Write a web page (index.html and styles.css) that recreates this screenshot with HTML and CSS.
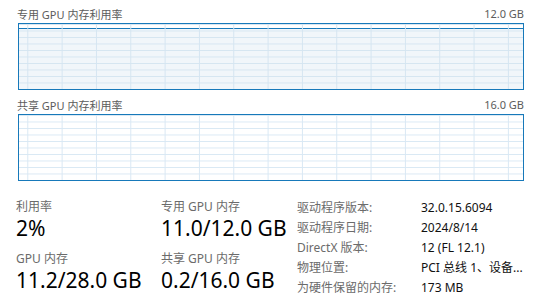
FILE: index.html
```html
<!DOCTYPE html>
<html lang="zh-CN">
<head>
  <meta charset="UTF-8">
  <meta name="viewport" content="width=device-width, initial-scale=1.0">
  <title>GPU 内存</title>
  <link rel="stylesheet" href="styles.css">
</head>
<body>
  <div class="page">
    <div class="chart-head">
      <span>专用 GPU 内存利用率</span>
      <span>12.0 GB</span>
    </div>
    <div class="chart chart-used"></div>

    <div class="chart-head second">
      <span>共享 GPU 内存利用率</span>
      <span>16.0 GB</span>
    </div>
    <div class="chart"></div>

    <div class="stats">
      <div class="col">
        <div class="stat">
          <div class="label">利用率</div>
          <div class="value">2%</div>
        </div>
        <div class="stat">
          <div class="label">GPU 内存</div>
          <div class="value">11.2/28.0 GB</div>
        </div>
      </div>
      <div class="col mid">
        <div class="stat">
          <div class="label">专用 GPU 内存</div>
          <div class="value">11.0/12.0 GB</div>
        </div>
        <div class="stat">
          <div class="label">共享 GPU 内存</div>
          <div class="value">0.2/16.0 GB</div>
        </div>
      </div>
      <div class="details">
        <span class="key">驱动程序版本:</span><span>32.0.15.6094</span>
        <span class="key">驱动程序日期:</span><span>2024/8/14</span>
        <span class="key">DirectX 版本:</span><span>12 (FL 12.1)</span>
        <span class="key">物理位置:</span><span>PCI 总线 1、设备...</span>
        <span class="key">为硬件保留的内存:</span><span>173 MB</span>
      </div>
    </div>
  </div>
</body>
</html>
```

FILE: styles.css
```css
* { box-sizing: border-box; margin: 0; padding: 0; }
body {
  font-family: 'Segoe UI', 'Noto Sans', 'Noto Sans CJK SC', sans-serif;
  background: #fff;
  color: #000;
}
.page {
  width: 543px;
  padding: 4px 19px 0 18px;
}
.chart-head {
  display: flex;
  justify-content: space-between;
  align-items: center;
  height: 19px;
  font-size: 11px;
  color: #5c5c5c;
}
.chart-head span:first-child { margin-left: -1px; }
.chart-head.second { margin-top: 5px; }
.chart {
  height: 67px;
  border: 1px solid #1779ba;
  background-color: #fff;
  background-image:
    linear-gradient(to right, #d9e8f4 1px, transparent 1px),
    linear-gradient(to bottom, #d9e8f4 1px, transparent 1px);
  background-size: 34.33px 100%, 100% 10%;
  background-position: 8.3px 0, 0 0;
}
.chart-used {
  background-image:
    linear-gradient(to right, #d5e5f1 1px, transparent 1px),
    linear-gradient(to bottom, #d5e5f1 1px, transparent 1px),
    linear-gradient(to bottom, transparent 4px, #1779ba 4px, #1779ba 5px, #f1f6fa 5px);
  background-size: 34.33px 100%, 100% 10%, 100% 100%;
  background-position: 8.3px 0, 0 0, 0 0;
}
.stats {
  display: flex;
  margin: 17px 0 0 -2px;
}
.col { width: 145px; }
.col.mid { width: 136px; }
.stat + .stat { margin-top: 10px; }
.label {
  font-size: 12px;
  line-height: 18px;
  color: #6b6b6b;
}
.value {
  font-size: 21px;
  line-height: 24px;
  color: #000;
}
.details {
  display: grid;
  grid-template-columns: 124px auto;
  grid-auto-rows: 20px;
  align-items: center;
  margin-top: -1px;
  font-size: 12px;
  color: #111;
}
.details .key { color: #6b6b6b; }
```
